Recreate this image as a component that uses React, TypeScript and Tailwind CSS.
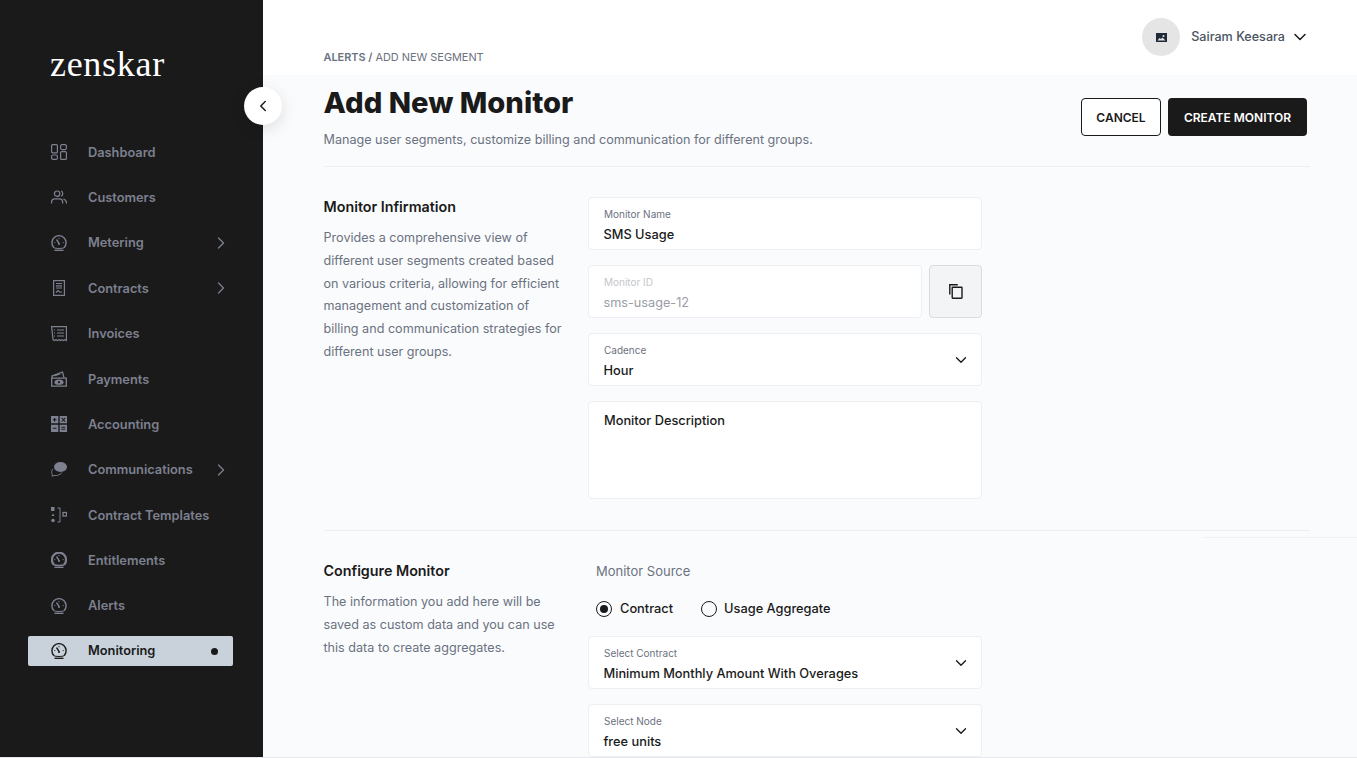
import { ChevronDown, ChevronLeft, ChevronRight } from "lucide-react";
import type { ReactNode } from "react";

const font = { fontFamily: "Inter, sans-serif" };

function Gauge({ solid }: { solid?: boolean }) {
  return (
    <svg width="16" height="16" viewBox="0 0 16 16" fill="none" stroke="currentColor" strokeWidth={solid ? 2.2 : 1.4}>
      <path d="M3 12.800A7.100 7.100 0 1 1 13 12.800" />
      <path d="M3 12.800c1.500.9 8.500.9 10 0" strokeWidth={solid ? 1.6 : 1} />
      <path d="M3.500 15.300h9" strokeWidth="1.400" />
      <path d="M8 8.300 5.800 5" strokeWidth="1.400" strokeLinecap="round" />
      <path d="M8 3v1.200M3.300 7.600h1M11.700 7.600h1" strokeWidth="1" />
      <circle cx="8" cy="9" r="1" fill="currentColor" stroke="none" />
    </svg>
  );
}

const icons: Record<string, ReactNode> = {
  dashboard: (
    <svg width="16" height="16" viewBox="0 0 16 16" fill="none" stroke="currentColor" strokeWidth="1.200">
      <rect x=".6" y=".6" width="5.800" height="8.300" rx="1" />
      <rect x="9.600" y=".6" width="5.800" height="5" rx="1.500" />
      <rect x=".6" y="11" width="5.800" height="4.400" rx="1.500" />
      <rect x="9.600" y="7.600" width="5.800" height="7.800" rx="1" />
    </svg>
  ),
  customers: (
    <svg width="17" height="15" viewBox="0 0 17 15" fill="none" stroke="currentColor" strokeWidth="1.300">
      <circle cx="6.500" cy="3.500" r="2.900" />
      <path d="M.6 14v-1.500c0-2 1.600-3.500 3.500-3.500h4.800c2 0 3.500 1.500 3.500 3.500V14" />
      <path d="M10.800.8c2.200.5 2.200 4.900 0 5.400M13.200 9.200c1.900.4 3.200 1.700 3.200 3.600V14" />
    </svg>
  ),
  metering: <Gauge />,
  contracts: (
    <svg width="12" height="16" viewBox="0 0 12 16" fill="none" stroke="currentColor" strokeWidth="1.200">
      <rect x=".6" y=".6" width="10.800" height="14.800" />
      <path d="M3 3.500h6M3 5.800h6M3 8h6M3 12.500l2-2 1.500 1.500H9" />
    </svg>
  ),
  invoices: (
    <svg width="16" height="16" viewBox="0 0 16 16" fill="none" stroke="currentColor" strokeWidth="1.200">
      <path d="M.6.6h14.800v14l-1.500-.8-1.500.8-1.500-.8-1.500.8-1.400-.8-1.500.8-1.500-.8-1.500.8-1.400-.8z" />
      <path d="M3 4h1M6 4h7M3 7h1M6 7h7M3 10h1M6 10h7" />
    </svg>
  ),
  payments: (
    <svg width="16" height="16" viewBox="0 0 16 16" fill="none" stroke="currentColor" strokeWidth="1.300">
      <path d="M.7 7.200h14.600v8H.7z" />
      <path d="M1 7V5L11.500 1l1.500 5.800M4 4.600l6-2.300M1.500 5l9-3.500" />
      <ellipse cx="8" cy="11.200" rx="4.500" ry="2.600" fill="currentColor" stroke="none" />
      <circle cx="8" cy="11.200" r="1.100" fill="#1a1a1a" stroke="none" />
    </svg>
  ),
  accounting: (
    <svg width="16" height="16" viewBox="0 0 16 16" fill="currentColor">
      <path fillRule="evenodd" d="M0 0h7.300v7.300H0zM3 2v1.200H1.800v1H3v1.200h1.200V4.200h1.300v-1H4.200V2zM8.700 0H16v7.300H8.700zM10.300 2.200l1.600 1.500-1.600 1.500.7.7 1.400-1.500 1.500 1.500.7-.7-1.500-1.500 1.500-1.500-.7-.7-1.500 1.500L11 1.500zM0 8.700h7.300V16H0zM1.800 11.800v1h3.700v-1zM8.700 8.700H16V16H8.700zM10.300 10.800v1h4v-1zM10.300 12.800v1h4v-1z" />
    </svg>
  ),
  communications: (
    <svg width="16" height="15" viewBox="0 0 16 15" fill="none">
      <ellipse cx="9.500" cy="5" rx="6.500" ry="5" fill="currentColor" />
      <path d="M11 10.500c-2 2.300-5 3.500-8 3-.5-.1-1.500.6-2 .8l.4-1.800C.3 11 .3 9 1.800 7" stroke="currentColor" strokeWidth=".9" />
    </svg>
  ),
  templates: (
    <svg width="16" height="16" viewBox="0 0 16 16" fill="none" stroke="currentColor">
      <rect x="0" y="0" width="3.500" height="4" fill="currentColor" stroke="none" />
      <path d="M2 6.500 3.500 9H.5z" fill="currentColor" stroke="none" />
      <circle cx="2" cy="13.500" r="1.800" fill="currentColor" stroke="none" />
      <path d="M6.500 1H9v14H6.500" strokeWidth="1" />
      <rect x="12" y="5.500" width="3.500" height="3.500" strokeWidth="1.300" />
    </svg>
  ),
  entitlements: <Gauge solid />,
  alerts: <Gauge />,
  monitoring: <Gauge />,
};

const navItems = [
  { key: "dashboard", label: "Dashboard" },
  { key: "customers", label: "Customers" },
  { key: "metering", label: "Metering", arrow: true },
  { key: "contracts", label: "Contracts", arrow: true },
  { key: "invoices", label: "Invoices" },
  { key: "payments", label: "Payments" },
  { key: "accounting", label: "Accounting" },
  { key: "communications", label: "Communications", arrow: true },
  { key: "templates", label: "Contract Templates" },
  { key: "entitlements", label: "Entitlements" },
  { key: "alerts", label: "Alerts" },
];

function NavRow({ icon, label, arrow }: { icon: string; label: string; arrow?: boolean }) {
  return (
    <div className="flex h-[30px] items-center pl-[23px] pr-[2px] text-[#7d808f]">
      <div className="flex w-[16px] justify-center">{icons[icon]}</div>
      <span className="ml-[21px] flex-1 text-[12.800px] font-semibold">{label}</span>
      {arrow && <ChevronRight size={20} strokeWidth={1.500} />}
    </div>
  );
}

function Field({ label, value, arrow }: { label: string; value: string; arrow?: boolean }) {
  return (
    <div className="flex h-[53px] items-center justify-between rounded border border-[#edeff2] bg-white pl-[14.500px] pr-[11px]">
      <div className="pt-[3px]">
        <div className="pl-[.5px] text-[10px] leading-[14px] text-[#6b7280]">{label}</div>
        <div className="mt-[5px] text-[12.800px] leading-[18px] font-medium text-[#1a1a1a]">{value}</div>
      </div>
      {arrow && <ChevronDown size={18} strokeWidth={1.800} className="text-[#1a1a1a]" />}
    </div>
  );
}

export default function App() {
  return (
    <div className="relative flex h-[758px] overflow-hidden border-b border-[#e5e7eb] bg-white" style={font}>
      <aside className="flex w-[263px] shrink-0 flex-col bg-[#1a1a1a] pl-[28px]">
        <div className="mt-[41px] pl-[22px] text-[36px] leading-[46px] tracking-[0.7px] text-white" style={{ fontFamily: '"Liberation Serif", serif' }}>
          zenskar
        </div>
        <nav className="mt-[50.400px] flex w-[205px] flex-col gap-[15.350px]">
          {navItems.map((n) => (
            <NavRow key={n.key} icon={n.key} label={n.label} arrow={n.arrow} />
          ))}
          <div className="flex h-[30px] items-center rounded-[2px] bg-[#c9d2da] pl-[23px] pr-[15px] text-[#1a1a1a]">
            <div className="flex w-[16px] justify-center">{icons.monitoring}</div>
            <span className="ml-[21px] flex-1 pb-[1px] text-[12.800px] font-semibold">Monitoring</span>
            <span className="h-[7px] w-[7px] rounded-full bg-[#1a1a1a]" />
          </div>
        </nav>
      </aside>

      <button className="absolute left-[244px] top-[87px] z-10 flex h-[38px] w-[38px] items-center justify-center rounded-full bg-white shadow-[0_4px_16px_rgba(0,0,0,0.12)]">
        <ChevronLeft size={18} strokeWidth={2} className="text-[#1a1a1a]" />
      </button>

      <main className="min-w-0 flex-1">
        <header className="flex h-[75px] justify-between bg-white pl-[60.500px] pr-[47px]">
          <div className="pt-[50.500px] text-[10.900px] leading-[13px] text-[#6b7280]">
            <span className="font-semibold">ALERTS /</span> ADD NEW SEGMENT
          </div>
          <div className="mt-[18px] flex h-[38px] items-center">
            <div className="flex h-[38px] w-[38px] items-center justify-center rounded-full bg-[#e5e5e5]">
              <svg width="11" height="9" viewBox="0 0 11 9" fill="#1f2937">
                <path fillRule="evenodd" d="M0 0h11v9H0zM7.500 2a1 1 0 1 0 0 2 1 1 0 0 0 0-2zM1.500 7.500h8L6.500 4.500 5 6 3.500 5z" />
              </svg>
            </div>
            <span className="ml-[11px] text-[12.600px] font-medium text-[#4b5563]">Sairam Keesara</span>
            <ChevronDown size={20} strokeWidth={1.800} className="ml-[5px] text-[#1a1a1a]" />
          </div>
        </header>

        <div className="h-[682px] bg-[#fafbfd] pl-[60.500px] pr-[47px]">
          <div className="flex items-start justify-between border-b border-[#edeff2] pb-[17px] pt-[10px]">
            <div>
              <h1 className="text-[29.200px] leading-[36px] font-extrabold text-[#1a1a1a]">Add New Monitor</h1>
              <p className="mt-[10px] text-[12.600px] leading-[18px] text-[#6b7280]">
                Manage user segments, customize billing and communication for different groups.
              </p>
            </div>
            <div className="mr-[3px] mt-[13px] flex gap-[7px]">
              <button className="h-[38px] w-[80px] rounded border border-[#1a1a1a] bg-white pt-[1px] text-[12px] font-semibold text-[#1a1a1a]">CANCEL</button>
              <button className="h-[38px] w-[139px] rounded bg-[#1a1a1a] pt-[1px] text-[12px] font-semibold text-white">CREATE MONITOR</button>
            </div>
          </div>

          <section className="flex border-b border-[#edeff2] pb-[31px] pt-[30px]">
            <div className="w-[264.500px] shrink-0 pr-[22px]">
              <h2 className="text-[14.300px] leading-[20px] font-semibold text-[#1a1a1a]">Monitor Infirmation</h2>
              <p className="mt-[10px] text-[12.600px] leading-[22.800px] text-[#6b7280]">
                Provides a comprehensive view of different user segments created based on various criteria, allowing for efficient management and customization of billing and communication strategies for different user groups.
              </p>
            </div>
            <div className="flex w-[394px] flex-col gap-[15px]">
              <Field label="Monitor Name" value="SMS Usage" />
              <div className="flex gap-[7px]">
                <div className="flex h-[53px] flex-1 flex-col justify-center rounded border border-[#edeff2] bg-white pl-[14.500px] pt-[3px]">
                  <div className="pl-[.5px] text-[10px] leading-[14px] text-[#c4c6ca]">Monitor ID</div>
                  <div className="mt-[5px] text-[12.700px] leading-[18px] text-[#9a9da3]">sms-usage-12</div>
                </div>
                <div className="flex h-[53px] w-[53px] items-center justify-center rounded border border-[#d9dce1] bg-[#f3f4f6]">
                  <svg width="14" height="15" viewBox="0 0 14 15" fill="none" stroke="#1a1a1a" strokeWidth="1.400">
                    <path d="M.8 10.500V.8h8" />
                    <rect x="3.200" y="3.200" width="9.800" height="11" rx=".6" />
                  </svg>
                </div>
              </div>
              <Field label="Cadence" value="Hour" arrow />
              <div className="h-[98px] rounded border border-[#edeff2] bg-white pl-[15px] pt-[10px] text-[12.800px] leading-[18px] font-medium text-[#1a1a1a]">
                Monitor Description
              </div>
            </div>
          </section>

          <section className="flex pt-[30px]">
            <div className="w-[264.500px] shrink-0 pr-[22px]">
              <h2 className="text-[14.300px] leading-[20px] font-semibold text-[#1a1a1a]">Configure Monitor</h2>
              <p className="mt-[10px] text-[12.600px] leading-[22.800px] text-[#6b7280]">
                The information you add here will be saved as custom data and you can use this data to create aggregates.
              </p>
            </div>
            <div className="flex w-[394px] flex-col">
              <div className="pl-[8px] text-[13px] leading-[20px] text-[#6b7280]">Monitor Source</div>
              <div className="mt-[18px] flex h-[20px] items-center pl-[8px] text-[12.800px] font-medium text-[#1a1a1a]">
                <span className="flex h-[16px] w-[16px] items-center justify-center rounded-full border-[1.500px] border-[#1a1a1a]">
                  <span className="h-[8px] w-[8px] rounded-full bg-[#1a1a1a]" />
                </span>
                <span className="ml-[8px]">Contract</span>
                <span className="ml-[28px] h-[16px] w-[16px] rounded-full border-[1.500px] border-[#1a1a1a]" />
                <span className="ml-[7px]">Usage Aggregate</span>
              </div>
              <div className="mt-[17px] flex flex-col gap-[15px]">
                <Field label="Select Contract" value="Minimum Monthly Amount With Overages" arrow />
                <Field label="Select Node" value="free units" arrow />
              </div>
            </div>
          </section>
        </div>
      </main>

      <div className="absolute left-[1203px] top-[537px] h-px w-[154px] bg-[#f0f1f4]" />
    </div>
  );
}
